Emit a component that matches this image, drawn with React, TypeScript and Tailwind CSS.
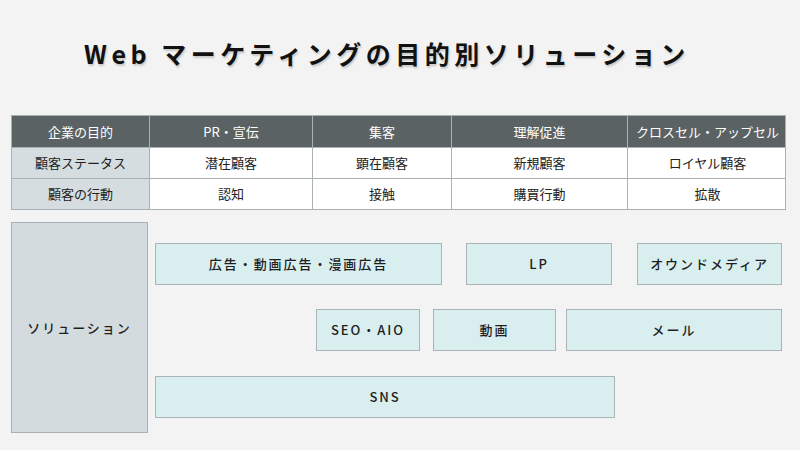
import React from "react";

const font = { fontFamily: '"Noto Sans CJK JP", "Noto Sans", sans-serif' };

const cols = ["w-[137px]", "w-[163px]", "w-[139px]", "w-[176px]", "w-[160px]"];

const rows: string[][] = [
  ["企業の目的", "PR・宣伝", "集客", "理解促進", "クロスセル・アップセル"],
  ["顧客ステータス", "潜在顧客", "顕在顧客", "新規顧客", "ロイヤル顧客"],
  ["顧客の行動", "認知", "接触", "購買行動", "拡散"],
];

function Box({ w, children }: { w: string; children: React.ReactNode }) {
  return (
    <div
      className={`${w} h-[42px] shrink-0 flex items-center justify-center bg-[#d8eeef] border border-[#aab4b8] text-[13px] font-medium tracking-[0.15em] text-[#1f1f1f]`}
    >
      {children}
    </div>
  );
}

export default function App() {
  return (
    <div className="w-[800px] h-[450px] bg-[#f3f3f3] overflow-hidden" style={font}>
      <div className="h-[115px] pl-[84px] pt-[35px]">
        <h1 className="text-[25px] leading-[36px] font-bold tracking-[0.18em] text-[#111] [text-shadow:1px_2px_2px_rgba(0,0,0,0.18)]">
          Web マーケティングの目的別ソリューション
        </h1>
      </div>
      <div className="ml-[11px] w-[775px] border border-[#aab1b5]">
        {rows.map((r, ri) => (
          <div
            key={ri}
            className={`flex ${ri === 0 ? "h-[31px] bg-[#5a6264] text-white" : "h-[31px] bg-white text-[#222] border-t border-[#aab1b5]"}`}
          >
            {r.map((c, ci) => (
              <div
                key={ci}
                className={`${cols[ci]} shrink-0 flex items-center justify-center text-[13px] ${ci > 0 ? "border-l border-[#aab1b5]" : ""} ${ri > 0 && ci === 0 ? "bg-[#d5dde0]" : ""}`}
              >
                {c}
              </div>
            ))}
          </div>
        ))}
      </div>
      <div className="flex mt-[12px] ml-[11px]">
        <div className="w-[137px] h-[211px] shrink-0 bg-[#d3dbde] border border-[#aab1b5] flex items-center justify-center text-[13px] font-medium tracking-[0.15em] text-[#1f1f1f]">
          ソリューション
        </div>
        <div className="flex flex-col pt-[21px]">
          <div className="flex ml-[7px]">
            <Box w="w-[287px]">広告・動画広告・漫画広告</Box>
            <div className="w-[24px] shrink-0" />
            <Box w="w-[146px]">LP</Box>
            <div className="w-[25px] shrink-0" />
            <Box w="w-[145px]">オウンドメディア</Box>
          </div>
          <div className="flex ml-[168px] mt-[24px]">
            <Box w="w-[104px]">SEO・AIO</Box>
            <div className="w-[13px] shrink-0" />
            <Box w="w-[123px]">動画</Box>
            <div className="w-[10px] shrink-0" />
            <Box w="w-[216px]">メール</Box>
          </div>
          <div className="flex ml-[7px] mt-[25px]">
            <Box w="w-[460px]">SNS</Box>
          </div>
        </div>
      </div>
    </div>
  );
}
